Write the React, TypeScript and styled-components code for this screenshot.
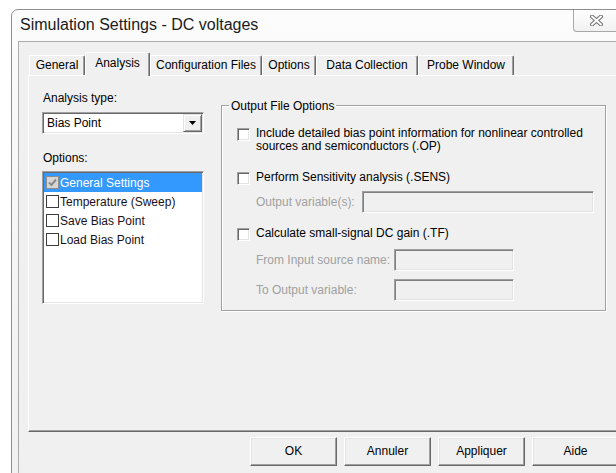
import React from "react";
import styled, { createGlobalStyle } from "styled-components";

const GlobalStyle = createGlobalStyle`
  html, body {
    margin: 0;
    padding: 0;
    background: #ffffff;
    overflow: hidden;
  }
  body {
    font-family: "Liberation Sans", Arial, sans-serif;
    font-size: 12px;
    color: #000000;
  }
  * { box-sizing: border-box; }
`;

/* ---------- window frame ---------- */

const Window = styled.div`
  margin: 9px 0 0 11px;
  width: 627px;
  border: 1px solid #8e8e8e;
  border-top-left-radius: 7px;
  background: linear-gradient(180deg, #fcfcfc 0%, #f4f4f4 60%, #f1f1f1 100%);
  padding-bottom: 30px;
`;

const TitleBar = styled.div`
  display: grid;
  grid-template-columns: 561px 50px;
  height: 31px;
`;

const Title = styled.div`
  padding-left: 8px;
  font-size: 16px;
  line-height: 29px;
  color: #1b1b1b;
  white-space: nowrap;
`;

const CloseButton = styled.div`
  height: 22px;
  border: 1px solid #a8a8a8;
  border-top: none;
  border-bottom-left-radius: 4px;
  background: linear-gradient(180deg, #fefefe 0%, #f1f1f1 100%);
  display: flex;
  align-items: center;
  justify-content: center;
  padding-right: 4px;
`;

const Client = styled.div`
  margin: 0 6px;
  border: 1px solid #ababab;
  background: #f0f0f0;
  padding: 10px 9px 20px 9px;
`;

/* ---------- tabs ---------- */

const TabStrip = styled.div`
  display: flex;
  align-items: flex-end;
  height: 23px;
  padding-left: 1px;
`;

const Tab = styled.div<{ $w: number; $active?: boolean }>`
  width: ${(p) => p.$w}px;
  height: ${(p) => (p.$active ? 24 : 20)}px;
  line-height: ${(p) => (p.$active ? 20 : 19)}px;
  margin-bottom: ${(p) => (p.$active ? -1 : 0)}px;
  position: relative;
  z-index: ${(p) => (p.$active ? 1 : 0)};
  text-align: center;
  background: #f0f0f0;
  border-top: 1px solid #ffffff;
  border-left: 1px solid #ffffff;
  border-right: 1px solid #696969;
  box-shadow: inset -1px 0 0 #a0a0a0;
  border-radius: 2px 2px 0 0;
  white-space: nowrap;
`;

const Panel = styled.div`
  height: 357px;
  border: 1px solid;
  border-color: #ffffff #696969 #696969 #ffffff;
  box-shadow: inset -1px -1px 0 #a0a0a0;
  display: flex;
  align-items: flex-start;
  gap: 17px;
  padding: 15px 0 0 13px;
`;

/* ---------- left column ---------- */

const Column = styled.div`
  width: 162px;
  display: flex;
  flex-direction: column;
`;

const FieldLabel = styled.div<{ $gap?: number }>`
  line-height: 14px;
  padding-left: 1px;
  margin-top: ${(p) => p.$gap ?? 0}px;
`;

const Combo = styled.div`
  margin-top: 7px;
  height: 22px;
  background: #ffffff;
  border: 1px solid;
  border-color: #a0a0a0 #ffffff #ffffff #a0a0a0;
  box-shadow: inset 1px 1px 0 #696969, inset -1px -1px 0 #e3e3e3;
  display: flex;
  align-items: stretch;
  padding: 1px;
`;

const ComboValue = styled.div`
  flex: 1;
  line-height: 18px;
  padding-left: 3px;
`;

const ComboArrow = styled.div`
  width: 19px;
  border: 1px solid;
  border-color: #e3e3e3 #696969 #696969 #e3e3e3;
  box-shadow: inset 1px 1px 0 #ffffff, inset -1px -1px 0 #a0a0a0;
  background: #f0f0f0;
  display: flex;
  align-items: center;
  justify-content: center;
`;

const ListBox = styled.div`
  margin-top: 6px;
  height: 133px;
  background: #ffffff;
  border: 1px solid;
  border-color: #a0a0a0 #ffffff #ffffff #a0a0a0;
  box-shadow: inset 1px 1px 0 #696969, inset -1px -1px 0 #e3e3e3;
  padding: 1px;
`;

const ListItem = styled.div<{ $selected?: boolean }>`
  height: 19px;
  display: flex;
  align-items: center;
  gap: 1px;
  padding-left: 2px;
  background: ${(p) => (p.$selected ? "#3399ff" : "transparent")};
  color: ${(p) => (p.$selected ? "#ffffff" : "#1a1020")};
  white-space: nowrap;
`;

const ListCheck = styled.span<{ $dim?: boolean }>`
  width: 13px;
  height: 13px;
  flex: none;
  border: 1px solid ${(p) => (p.$dim ? "#8c8c8c" : "#3c3c3c")};
  background: ${(p) => (p.$dim ? "#d6d6d6" : "#ffffff")};
  display: flex;
  align-items: center;
  justify-content: center;
`;

/* ---------- output file group ---------- */

const Group = styled.div`
  margin-top: 14px;
  width: 385px;
  height: 206px;
  border: 1px solid #a0a0a0;
  box-shadow: inset 1px 1px 0 #ffffff, 1px 1px 0 #ffffff;
  padding: 1px 0 0 1px;
`;

const Legend = styled.div`
  width: fit-content;
  margin: -8px 0 0 6px;
  padding: 0 2px;
  line-height: 14px;
  background: #f0f0f0;
`;

const OptionRow = styled.div<{ $gap: number }>`
  display: flex;
  align-items: flex-start;
  gap: 6px;
  padding-left: 14px;
  margin-top: ${(p) => p.$gap}px;
  line-height: 13px;
`;

const Check3D = styled.span`
  width: 13px;
  height: 13px;
  flex: none;
  margin-top: 1px;
  background: #ffffff;
  border: 1px solid;
  border-color: #a0a0a0 #ffffff #ffffff #a0a0a0;
  box-shadow: inset 1px 1px 0 #696969, inset -1px -1px 0 #e3e3e3;
`;

const SubRow = styled.div<{ $label: number; $gap: number; $input: number }>`
  display: grid;
  grid-template-columns: ${(p) => p.$label}px ${(p) => p.$input}px;
  align-items: center;
  padding-left: 33px;
  margin-top: ${(p) => p.$gap}px;
`;

const DimLabel = styled.span`
  color: #a0a0a0;
  white-space: nowrap;
`;

const DimInput = styled.div`
  height: 22px;
  background: #f0f0f0;
  border: 1px solid;
  border-color: #a0a0a0 #ffffff #ffffff #a0a0a0;
  box-shadow: inset 1px 1px 0 #808080, inset -1px -1px 0 #e3e3e3;
`;

/* ---------- buttons ---------- */

const ButtonRow = styled.div`
  display: flex;
  justify-content: flex-end;
  gap: 7px;
  margin-top: 5px;
  padding-right: 2px;
`;

const Button = styled.div`
  width: 87px;
  height: 29px;
  line-height: 26px;
  text-align: center;
  background: #f0f0f0;
  border: 1px solid;
  border-color: #ffffff #696969 #696969 #ffffff;
  box-shadow: inset -1px -1px 0 #a0a0a0, inset 1px 1px 0 #e3e3e3;
`;

/* ---------- drawings ---------- */

const CloseGlyph = () => (
  <svg width="13" height="11" viewBox="0 0 13 11">
    <path d="M2 1.5 L11 9.5 M11 1.5 L2 9.5" stroke="#6e6e6e" strokeWidth="4" strokeLinecap="round" fill="none" />
    <path d="M2 1.5 L11 9.5 M11 1.5 L2 9.5" stroke="#ffffff" strokeWidth="2" strokeLinecap="round" fill="none" />
  </svg>
);

const DownTriangle = () => (
  <svg width="7" height="4" viewBox="0 0 7 4">
    <path d="M0 0 H7 L3.5 4 Z" fill="#000000" />
  </svg>
);

const Tick = () => (
  <svg width="9" height="9" viewBox="0 0 9 9">
    <path d="M1 4.5 L3.5 7 L8 1.5" stroke="#8a8a8a" strokeWidth="2" fill="none" />
  </svg>
);

const tabs = [
  { label: "General", w: 56 },
  { label: "Analysis", w: 65, active: true },
  { label: "Configuration Files", w: 112 },
  { label: "Options", w: 54 },
  { label: "Data Collection", w: 102 },
  { label: "Probe Window", w: 96 },
];

const listItems = [
  { label: "General Settings", selected: true },
  { label: "Temperature (Sweep)" },
  { label: "Save Bias Point" },
  { label: "Load Bias Point" },
];

export default function App() {
  return (
    <>
      <GlobalStyle />
      <Window>
        <TitleBar>
          <Title>Simulation Settings - DC voltages</Title>
          <CloseButton>
            <CloseGlyph />
          </CloseButton>
        </TitleBar>
        <Client>
          <TabStrip>
            {tabs.map((t) => (
              <Tab key={t.label} $w={t.w} $active={t.active}>
                {t.label}
              </Tab>
            ))}
          </TabStrip>
          <Panel>
            <Column>
              <FieldLabel>Analysis type:</FieldLabel>
              <Combo>
                <ComboValue>Bias Point</ComboValue>
                <ComboArrow>
                  <DownTriangle />
                </ComboArrow>
              </Combo>
              <FieldLabel $gap={17}>Options:</FieldLabel>
              <ListBox>
                {listItems.map((it) => (
                  <ListItem key={it.label} $selected={it.selected}>
                    <ListCheck $dim={it.selected}>{it.selected && <Tick />}</ListCheck>
                    {it.label}
                  </ListItem>
                ))}
              </ListBox>
            </Column>
            <Group>
              <Legend>Output File Options</Legend>
              <OptionRow $gap={14}>
                <Check3D />
                <span>
                  Include detailed bias point information for nonlinear controlled
                  <br />
                  sources and semiconductors (.OP)
                </span>
              </OptionRow>
              <OptionRow $gap={18}>
                <Check3D />
                <span>Perform Sensitivity analysis (.SENS)</span>
              </OptionRow>
              <SubRow $label={106} $input={232} $gap={6}>
                <DimLabel>Output variable(s):</DimLabel>
                <DimInput />
              </SubRow>
              <OptionRow $gap={14}>
                <Check3D />
                <span>Calculate small-signal DC gain (.TF)</span>
              </OptionRow>
              <SubRow $label={138} $input={120} $gap={8}>
                <DimLabel>From Input source name:</DimLabel>
                <DimInput />
              </SubRow>
              <SubRow $label={138} $input={120} $gap={8}>
                <DimLabel>To Output variable:</DimLabel>
                <DimInput />
              </SubRow>
            </Group>
          </Panel>
          <ButtonRow>
            <Button>OK</Button>
            <Button>Annuler</Button>
            <Button>Appliquer</Button>
            <Button>Aide</Button>
          </ButtonRow>
        </Client>
      </Window>
    </>
  );
}
